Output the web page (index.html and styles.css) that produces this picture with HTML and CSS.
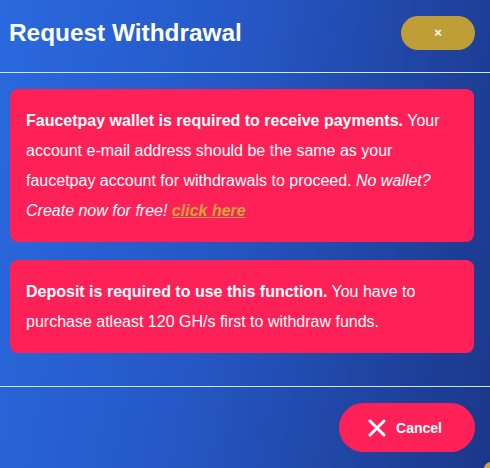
FILE: index.html
```html
<!DOCTYPE html>
<html>
<head>
<meta charset="utf-8">
<link rel="stylesheet" href="styles.css">
</head>
<body>
<div class="modal">
  <div class="modal-header">
    <h1 class="title">Request Withdrawal</h1>
    <button class="close-btn">×</button>
  </div>
  <div class="modal-body">
    <div class="alert">
      <b>Faucetpay wallet is required to receive payments.</b> Your account e-mail address should be the same as your faucetpay account for withdrawals to proceed. <i>No wallet? Create now for free! <a class="link" href="#">click here</a></i>
    </div>
    <div class="alert">
      <b>Deposit is required to use this function.</b> You have to purchase atleast 120 GH/s first to withdraw funds.
    </div>
  </div>
  <div class="modal-footer">
    <button class="cancel-btn">
      <svg class="x-icon" width="18" height="18" viewBox="0 0 18 18"><path d="M2 2L16 16M16 2L2 16" stroke="#fff" stroke-width="3" stroke-linecap="round"/></svg>
      <span>Cancel</span>
    </button>
  </div>
</div>
<div class="corner"></div>
</body>
</html>
```
FILE: styles.css
```css
* { box-sizing: border-box; }
html, body {
  margin: 0;
  height: 100%;
}
body {
  font-family: "Liberation Sans", Arial, sans-serif;
  background: linear-gradient(100deg, #2a69df 0%, #2557c4 45%, #1e3f98 85%, #1b378b 100%);
  color: #fff;
  overflow: hidden;
  position: relative;
}
.modal {
  display: flex;
  flex-direction: column;
}
.modal-header {
  display: flex;
  justify-content: space-between;
  align-items: center;
  height: 73px;
  padding: 0 15px 7px 9px;
  border-bottom: 1px solid #c8e8ff;
}
.title {
  margin: 0;
  font-size: 24.4px;
  font-weight: bold;
  color: #fff;
}
.close-btn {
  width: 74px;
  height: 34px;
  border: none;
  border-radius: 17px;
  background: #bf9e38;
  color: #fff;
  font-family: "Liberation Sans", Arial, sans-serif;
  font-weight: bold;
  font-size: 13px;
  padding: 0;
}
.modal-body {
  padding: 16px 16px 33px 10px;
  display: flex;
  flex-direction: column;
  gap: 18px;
  border-bottom: 1px solid #c8e8ff;
}
.alert {
  background: #fe2157;
  border-radius: 8px;
  padding: 17px 16px 16px 16px;
  font-size: 16px;
  line-height: 30px;
  color: #fff;
}
.alert b { font-weight: bold; }
.link {
  color: #d6a43e;
  font-weight: bold;
  text-decoration: underline;
}
.modal-footer {
  display: flex;
  justify-content: flex-end;
  padding: 16px 15px 0 0;
}
.cancel-btn {
  display: flex;
  align-items: center;
  justify-content: center;
  gap: 10px;
  width: 136px;
  height: 49px;
  border: none;
  border-radius: 25px;
  background: #fe2157;
  color: #fff;
  font-family: "Liberation Sans", Arial, sans-serif;
  font-weight: bold;
  font-size: 14px;
  padding: 0 4px 0 0;
}
.corner {
  position: absolute;
  right: -8px;
  bottom: -8px;
  width: 14px;
  height: 14px;
  border-radius: 50%;
  background: #c9a24a;
}
```
